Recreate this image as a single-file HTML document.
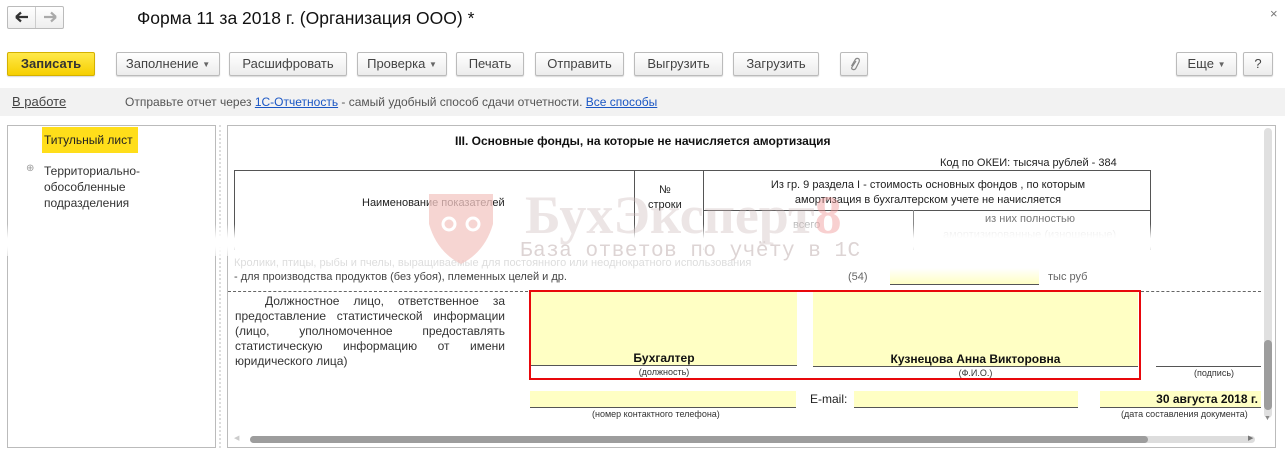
<!DOCTYPE html>
<html><head><meta charset="utf-8"><style>
*{box-sizing:border-box;margin:0;padding:0}
body{width:1285px;height:453px;background:#fff;font-family:"Liberation Sans",Arial,sans-serif;color:#333;position:relative;overflow:hidden;font-size:13px}
.a{position:absolute}
.btn{position:absolute;top:52px;height:24px;border:1px solid #bbb;border-radius:2px;background:linear-gradient(#fff,#ececec);box-shadow:0 1px 1px rgba(0,0,0,.15);font-size:13px;color:#444;text-align:center;line-height:22px}
.t{position:absolute;white-space:nowrap}
.y{position:absolute;background:#ffffc4}
.ln{position:absolute;height:1px;background:#555}
.sm{font-size:9px;color:#333}
.dd{font-size:8px;color:#666;vertical-align:1px}
</style></head><body>
<div class="a" style="left:7px;top:6px;width:57px;height:23px;border:1px solid #bbb;border-radius:2px;background:linear-gradient(#fff,#eee)"></div>
<div class="a" style="left:35px;top:7px;width:1px;height:21px;background:#ccc"></div>
<svg class="a" style="left:14px;top:11px" width="16" height="12"><path d="M2 6 H14 M2 6 L7 1.5 M2 6 L7 10.5" stroke="#333" stroke-width="2.2" fill="none"/></svg>
<svg class="a" style="left:42px;top:11px" width="16" height="12"><path d="M14 6 H2 M14 6 L9 1.5 M14 6 L9 10.5" stroke="#aaa" stroke-width="2.2" fill="none"/></svg>
<div class="t" style="left:137px;top:8px;font-size:17.5px;color:#111">Форма 11 за 2018 г. (Организация ООО) *</div>
<div class="t" style="left:1270px;top:6px;font-size:13px;color:#777">×</div>
<div class="btn" style="left:7px;width:88px;background:linear-gradient(#ffe94a,#f6cf00);border-color:#d4b100;font-weight:bold;color:#333">Записать</div>
<div class="btn" style="left:116px;width:104px">Заполнение <span class="dd">▼</span></div>
<div class="btn" style="left:229px;width:118px">Расшифровать</div>
<div class="btn" style="left:357px;width:90px">Проверка <span class="dd">▼</span></div>
<div class="btn" style="left:456px;width:68px">Печать</div>
<div class="btn" style="left:535px;width:89px">Отправить</div>
<div class="btn" style="left:634px;width:89px">Выгрузить</div>
<div class="btn" style="left:733px;width:86px">Загрузить</div>
<div class="btn" style="left:840px;width:28px"></div>
<svg class="a" style="left:848px;top:57px" width="12" height="14"><path d="M8 4 L4 10 Q3 12 5 12.5 Q7 13 8 11 L11 5 Q12 2 10 1.5 Q8 1 7 3 L3.5 9" stroke="#888" stroke-width="1.2" fill="none"/></svg>
<div class="btn" style="left:1176px;width:61px">Еще <span class="dd">▼</span></div>
<div class="btn" style="left:1243px;width:30px">?</div>
<div class="a" style="left:0;top:88px;width:1285px;height:28px;background:#f2f2f2"></div>
<div class="t" style="left:12px;top:94px;font-size:13px;color:#444;text-decoration:underline">В работе</div>
<div class="t" style="left:125px;top:95px;font-size:12px;color:#555">Отправьте отчет через <span style="color:#1a56c4;text-decoration:underline">1С-Отчетность</span> - самый удобный способ сдачи отчетности. <span style="color:#1a56c4;text-decoration:underline">Все способы</span></div>
<div class="a" style="left:7px;top:125px;width:209px;height:323px;border:1px solid #bbb"></div>
<div class="a" style="left:42px;top:127px;width:96px;height:26px;background:#ffde1a"></div>
<div class="t" style="left:44px;top:133px;font-size:12px;color:#222">Титульный лист</div>
<div class="t" style="left:26px;top:163px;font-size:10px;color:#999">⊕</div>
<div class="t" style="left:44px;top:163px;font-size:12px;color:#333;line-height:16px">Территориально-<br>обособленные<br>подразделения</div>
<div class="a" style="left:219px;top:125px;width:2px;height:323px;border-left:2px dotted #ddd"></div>
<div class="a" style="left:227px;top:125px;width:1049px;height:323px;border:1px solid #bbb"></div>
<div class="t" style="left:455px;top:134px;font-size:12px;font-weight:bold;color:#111">III. Основные фонды, на которые не начисляется амортизация</div>
<div class="t" style="left:940px;top:157px;font-size:11px;color:#222">Код по ОКЕИ: тысяча рублей - 384</div>
<div class="a" style="left:234px;top:170px;width:917px;height:80px;border:1px solid #555;border-bottom:none"></div>
<div class="a" style="left:634px;top:170px;width:1px;height:80px;background:#555"></div>
<div class="a" style="left:703px;top:170px;width:1px;height:80px;background:#555"></div>
<div class="a" style="left:703px;top:210px;width:448px;height:1px;background:#555"></div>
<div class="a" style="left:913px;top:210px;width:1px;height:40px;background:#888"></div>
<div class="t" style="left:362px;top:197px;font-size:11px;color:#222">Наименование показателей</div>
<div class="t" style="left:648px;top:183px;font-size:11px;color:#222;text-align:center;line-height:15px">№<br>строки</div>
<div class="t" style="left:742px;top:178px;font-size:11px;color:#222;text-align:center;line-height:15px;width:372px;white-space:normal">Из гр. 9 раздела I - стоимость основных фондов , по которым амортизация в бухгалтерском учете не начисляется</div>
<div class="t" style="left:793px;top:219px;font-size:11px;color:#bbb">всего</div>
<div class="t" style="left:985px;top:213px;font-size:11px;color:#777">из них полностью</div>
<div class="t" style="left:943px;top:229px;font-size:11px;color:#ddd">амортизированные (изношенные)</div>
<div class="a" style="left:0;top:224px;width:1262px;height:32px;background:linear-gradient(rgba(255,255,255,0),#fff 45%,#fff 70%,rgba(255,255,255,.6))"></div>
<div class="t" style="left:234px;top:257px;font-size:11px;color:#ddd">Кролики, птицы, рыбы и пчелы, выращиваемые для постоянного или неоднократного использования</div>
<!-- watermark on top -->
<svg class="a" style="left:425px;top:188px;opacity:.75" width="72" height="78"><path d="M4 6 H68 V36 Q60 64 36 76 Q12 64 4 36 Z" fill="#f4c8c4"/><circle cx="24" cy="36" r="6" fill="none" stroke="#fff" stroke-width="3"/><circle cx="48" cy="36" r="6" fill="none" stroke="#fff" stroke-width="3"/></svg>
<div class="t" style="left:525px;top:184px;font-size:54px;font-weight:bold;font-family:'Liberation Serif',serif;color:rgba(200,180,180,.35)">БухЭксперт<span style="color:rgba(240,150,150,.45)">8</span></div>
<div class="t" style="left:520px;top:240px;font-size:21px;font-family:'Liberation Mono',monospace;color:#ddd4d4;letter-spacing:0.5px">База ответов по учёту в 1С</div>
<div class="t" style="left:234px;top:271px;font-size:11px;color:#444">- для производства продуктов (без убоя), племенных целей и др.</div>
<div class="t" style="left:848px;top:271px;font-size:11px;color:#666">(54)</div>
<div class="a" style="left:890px;top:268px;width:149px;height:16px;background:linear-gradient(rgba(255,255,196,0),#ffffc4)"></div>
<div class="ln" style="left:890px;top:284px;width:149px"></div>
<div class="t" style="left:1048px;top:271px;font-size:11px;color:#666">тыс руб</div>
<div class="a" style="left:228px;top:291px;width:300px;border-top:1px dashed #666"></div>
<div class="a" style="left:1141px;top:291px;width:120px;border-top:1px dashed #666"></div>
<div class="a" style="left:235px;top:294px;width:270px;font-size:12px;color:#333;line-height:15px;text-align:justify;text-indent:30px">Должностное лицо, ответственное за предоставление статистической информации (лицо, уполномоченное предоставлять статистическую информацию от имени юридического лица)</div>
<div class="y" style="left:531px;top:292px;width:266px;height:73px"></div>
<div class="ln" style="left:531px;top:365px;width:266px"></div>
<div class="t" style="left:531px;top:351px;width:266px;text-align:center;font-size:12px;font-weight:bold;color:#111">Бухгалтер</div>
<div class="t sm" style="left:531px;top:367px;width:266px;text-align:center">(должность)</div>
<div class="y" style="left:813px;top:292px;width:325px;height:74px"></div>
<div class="ln" style="left:813px;top:366px;width:325px"></div>
<div class="t" style="left:813px;top:352px;width:325px;text-align:center;font-size:12px;font-weight:bold;color:#111">Кузнецова Анна Викторовна</div>
<div class="t sm" style="left:813px;top:368px;width:325px;text-align:center">(Ф.И.О.)</div>
<div class="a" style="left:529px;top:290px;width:612px;height:90px;border:2px solid #e8080c"></div>
<div class="ln" style="left:1156px;top:366px;width:105px"></div>
<div class="t sm" style="left:1194px;top:368px">(подпись)</div>
<div class="y" style="left:530px;top:391px;width:266px;height:16px"></div>
<div class="ln" style="left:530px;top:407px;width:266px"></div>
<div class="t sm" style="left:592px;top:409px">(номер контактного телефона)</div>
<div class="t" style="left:810px;top:392px;font-size:12px;color:#222">E-mail:</div>
<div class="y" style="left:854px;top:391px;width:224px;height:16px"></div>
<div class="ln" style="left:854px;top:407px;width:224px"></div>
<div class="y" style="left:1100px;top:391px;width:161px;height:16px"></div>
<div class="ln" style="left:1100px;top:407px;width:161px"></div>
<div class="t" style="left:1100px;top:392px;width:158px;text-align:right;font-size:12px;font-weight:bold;color:#111">30 августа 2018 г.</div>
<div class="t sm" style="left:1121px;top:409px">(дата составления документа)</div>
<div class="a" style="left:1264px;top:128px;width:8px;height:290px;background:#e0e0e0;border-radius:4px"></div>
<div class="a" style="left:1264px;top:340px;width:8px;height:70px;background:#9d9d9d;border-radius:4px"></div>
<div class="t" style="left:1264px;top:415px;font-size:7px;color:#888">▼</div>
<div class="a" style="left:250px;top:436px;width:1005px;height:7px;background:#ddd;border-radius:4px"></div>
<div class="a" style="left:250px;top:436px;width:898px;height:7px;background:#9d9d9d;border-radius:4px"></div>
<div class="t" style="left:234px;top:434px;font-size:7px;color:#ccc">◀</div>
<div class="t" style="left:1248px;top:434px;font-size:7px;color:#777">▶</div>
</body></html>
